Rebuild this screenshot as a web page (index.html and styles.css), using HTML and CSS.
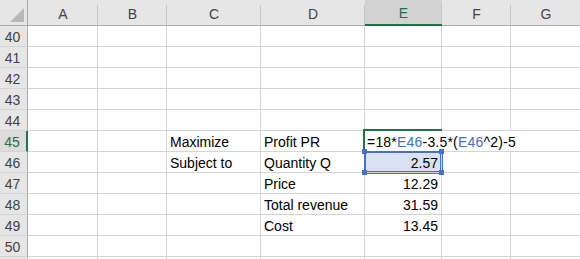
FILE: index.html
```
<!DOCTYPE html>
<html lang="en">
  <head>
    <meta charset="UTF-8" />
    <title>Sheet</title>
    <link rel="stylesheet" href="styles.css">
  </head>
  <body>
    <div class="sheet">
      <div class="corner"><span class="corner-tri"></span></div>
      <div class="colhead">A</div>
      <div class="colhead">B</div>
      <div class="colhead">C</div>
      <div class="colhead">D</div>
      <div class="colhead active">E</div>
      <div class="colhead">F</div>
      <div class="colhead">G</div>

      <div class="rowhead">40</div><div class="cell"></div><div class="cell"></div><div class="cell"></div><div class="cell"></div><div class="cell"></div><div class="cell"></div><div class="cell"></div>
      <div class="rowhead">41</div><div class="cell"></div><div class="cell"></div><div class="cell"></div><div class="cell"></div><div class="cell"></div><div class="cell"></div><div class="cell"></div>
      <div class="rowhead">42</div><div class="cell"></div><div class="cell"></div><div class="cell"></div><div class="cell"></div><div class="cell"></div><div class="cell"></div><div class="cell"></div>
      <div class="rowhead">43</div><div class="cell"></div><div class="cell"></div><div class="cell"></div><div class="cell"></div><div class="cell"></div><div class="cell"></div><div class="cell"></div>
      <div class="rowhead">44</div><div class="cell"></div><div class="cell"></div><div class="cell"></div><div class="cell"></div><div class="cell"></div><div class="cell"></div><div class="cell"></div>

      <div class="rowhead active-row">45</div><div class="cell"></div><div class="cell"></div><div class="cell">Maximize</div><div class="cell">Profit PR</div>
      <div class="cell editing">
        <span class="edit-text">=18*<span class="ref">E46</span>-3.5*(<span class="ref">E46</span>^2)-5</span>
      </div>
      <div class="cell"></div><div class="cell"></div>

      <div class="rowhead">46</div><div class="cell"></div><div class="cell"></div><div class="cell">Subject to</div><div class="cell">Quantity Q</div>
      <div class="cell num picked">2.57
        <span class="handle tl"></span><span class="handle tr"></span><span class="handle bl"></span><span class="handle br"></span>
      </div>
      <div class="cell"></div><div class="cell"></div>

      <div class="rowhead">47</div><div class="cell"></div><div class="cell"></div><div class="cell"></div><div class="cell">Price</div><div class="cell num">12.29</div><div class="cell"></div><div class="cell"></div>
      <div class="rowhead">48</div><div class="cell"></div><div class="cell"></div><div class="cell"></div><div class="cell">Total revenue</div><div class="cell num">31.59</div><div class="cell"></div><div class="cell"></div>
      <div class="rowhead">49</div><div class="cell"></div><div class="cell"></div><div class="cell"></div><div class="cell">Cost</div><div class="cell num">13.45</div><div class="cell"></div><div class="cell"></div>
      <div class="rowhead">50</div><div class="cell"></div><div class="cell"></div><div class="cell"></div><div class="cell"></div><div class="cell"></div><div class="cell"></div><div class="cell"></div>
      <div class="rowhead"></div><div class="cell"></div><div class="cell"></div><div class="cell"></div><div class="cell"></div><div class="cell"></div><div class="cell"></div><div class="cell"></div>
    </div>
  </body>
</html>
```

FILE: styles.css
```
body {
  margin: 0;
  font-family: "Liberation Sans", Arial, sans-serif;
  font-size: 14px;
  background: #fff;
  overflow: hidden;
}
.sheet {
  display: grid;
  grid-template-columns: 28px 70px 69px 94px 104px 77px 69px 70px;
  grid-template-rows: 26px repeat(12, 21px);
}
.corner {
  position: relative;
  background: #e6e6e6;
  border-right: 1px solid #ababab;
  border-bottom: 1px solid #ababab;
}
.corner-tri {
  position: absolute;
  right: 3px;
  bottom: 3px;
  width: 0;
  height: 0;
  border-left: 14px solid transparent;
  border-bottom: 14px solid #b9b9b9;
}
.colhead {
  position: relative;
  background: #e6e6e6;
  border-bottom: 1px solid #ababab;
  color: #444;
  text-align: center;
  line-height: 28px;
  font-size: 14px;
}
.colhead::after {
  content: "";
  position: absolute;
  right: 0;
  top: 5px;
  bottom: 0;
  width: 1px;
  background: #c6c6c6;
}
.colhead.active {
  background: #d2d2d2;
  color: #217346;
  border-bottom: 2px solid #217346;
  line-height: 27px;
}
.rowhead {
  background: #e6e6e6;
  border-right: 1px solid #ababab;
  border-bottom: 1px solid #d4d4d4;
  color: #444;
  text-align: center;
  line-height: 23px;
  font-size: 14px;
  padding-right: 2px;
}
.rowhead.active-row {
  background: #dcdcdc;
  color: #217346;
  border-right: 2px solid #217346;
}
.cell {
  position: relative;
  border-right: 1px solid #d4d4d4;
  border-bottom: 1px solid #d4d4d4;
  padding: 0 3px;
  line-height: 23px;
  color: #000;
  white-space: nowrap;
}
.num {
  text-align: right;
}
.editing {
  z-index: 2;
  border-right: none;
}
.editing::before {
  content: "";
  position: absolute;
  left: -2px;
  top: -2px;
  right: 0;
  bottom: 0;
  border-top: 2px solid #217346;
  border-left: 2px solid #217346;
}
.edit-text {
  position: absolute;
  left: 0;
  top: 0;
  width: 165px;
  padding-left: 2px;
  height: 20px;
  background: #fff;
  letter-spacing: 0.2px;
}
.ref {
  color: #4472c4;
}
.picked {
  z-index: 3;
  background: #d9e1f2;
  box-shadow: 0 0 0 1px #4472c4 inset;
  outline: 1px solid #4472c4;
  outline-offset: 0;
}
.handle {
  position: absolute;
  width: 5px;
  height: 5px;
  background: #4472c4;
}
.tl { left: -3px; top: -3px; }
.tr { right: -3px; top: -3px; }
.bl { left: -3px; bottom: -3px; }
.br { right: -3px; bottom: -3px; }
```
